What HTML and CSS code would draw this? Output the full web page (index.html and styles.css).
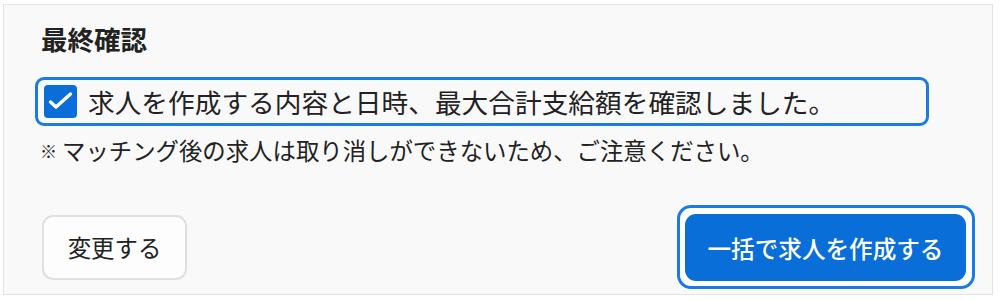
FILE: index.html
```html
<!DOCTYPE html>
<html lang="ja">
<head>
<meta charset="utf-8">
<link rel="stylesheet" href="styles.css">
</head>
<body>
<div class="panel">
  <h2 class="title">最終確認</h2>
  <label class="confirm">
    <span class="checkbox">
      <svg width="33" height="33" viewBox="0 0 33 33"><path d="M6.5 17 L12 22 L26.5 9" fill="none" stroke="#fff" stroke-width="3.4" stroke-linecap="round" stroke-linejoin="round"/></svg>
    </span>
    <span class="confirm-text">求人を作成する内容と日時、最大合計支給額を確認しました。</span>
  </label>
  <p class="note"><span class="mark">※</span>マッチング後の求人は取り消しができないため、ご注意ください。</p>
  <div class="actions">
    <button class="btn-secondary">変更する</button>
    <div class="focus-ring">
      <button class="btn-primary">一括で求人を作成する</button>
    </div>
  </div>
</div>
</body>
</html>
```
FILE: styles.css
```css
html, body {
  margin: 0;
  padding: 0;
  background: #ffffff;
}
body {
  font-family: "Noto Sans CJK JP", "Noto Sans", sans-serif;
  color: #222222;
}
.panel {
  box-sizing: border-box;
  margin: 4px 0 0 3px;
  width: 990px;
  height: 291px;
  background: #f9f9f9;
  border: 1px solid #e4e4e4;
  padding: 16px 17px 5px 31px;
  display: flex;
  flex-direction: column;
  align-items: flex-start;
}
.title {
  margin: 0 0 0 6px;
  font-size: 26.5px;
  line-height: 36px;
  font-weight: 700;
  color: #222;
}
.confirm {
  box-sizing: border-box;
  margin-top: 20px;
  width: 894px;
  height: 49px;
  border: 3px solid #1a7be6;
  border-radius: 9px;
  padding: 0 6px;
  display: flex;
  align-items: center;
  gap: 11px;
}
.checkbox {
  width: 33px;
  height: 33px;
  flex: none;
  background: #0b6dd8;
  border-radius: 4px;
  display: flex;
}
.confirm-text {
  font-size: 26.7px;
  line-height: 36px;
  color: #222;
  white-space: nowrap;
}
.note {
  margin: 8px 0 0 5px;
  font-size: 23.4px;
  line-height: 33px;
  white-space: nowrap;
}
.mark {
  font-size: 17px;
  margin-right: 5px;
  position: relative;
  top: -2px;
}
.actions {
  margin-top: auto;
  align-self: stretch;
  margin-left: 7px;
  display: flex;
  justify-content: space-between;
  align-items: center;
}
.btn-secondary {
  box-sizing: border-box;
  width: 145px;
  height: 65px;
  background: #fdfdfd;
  border: 2px solid #e0e0e0;
  border-radius: 11px;
  font-family: inherit;
  font-size: 23.4px;
  color: #222;
  padding: 0;
}
.focus-ring {
  box-sizing: border-box;
  border: 3px solid #1a7be6;
  border-radius: 14px;
  background: #ffffff;
  padding: 6px 6px 5px 5px;
  display: flex;
}
.btn-primary {
  box-sizing: border-box;
  width: 281px;
  height: 67px;
  background: #0a6ed8;
  border: none;
  border-radius: 11px;
  font-family: inherit;
  font-size: 23.6px;
  font-weight: 500;
  color: #ffffff;
  padding: 0;
}
```
